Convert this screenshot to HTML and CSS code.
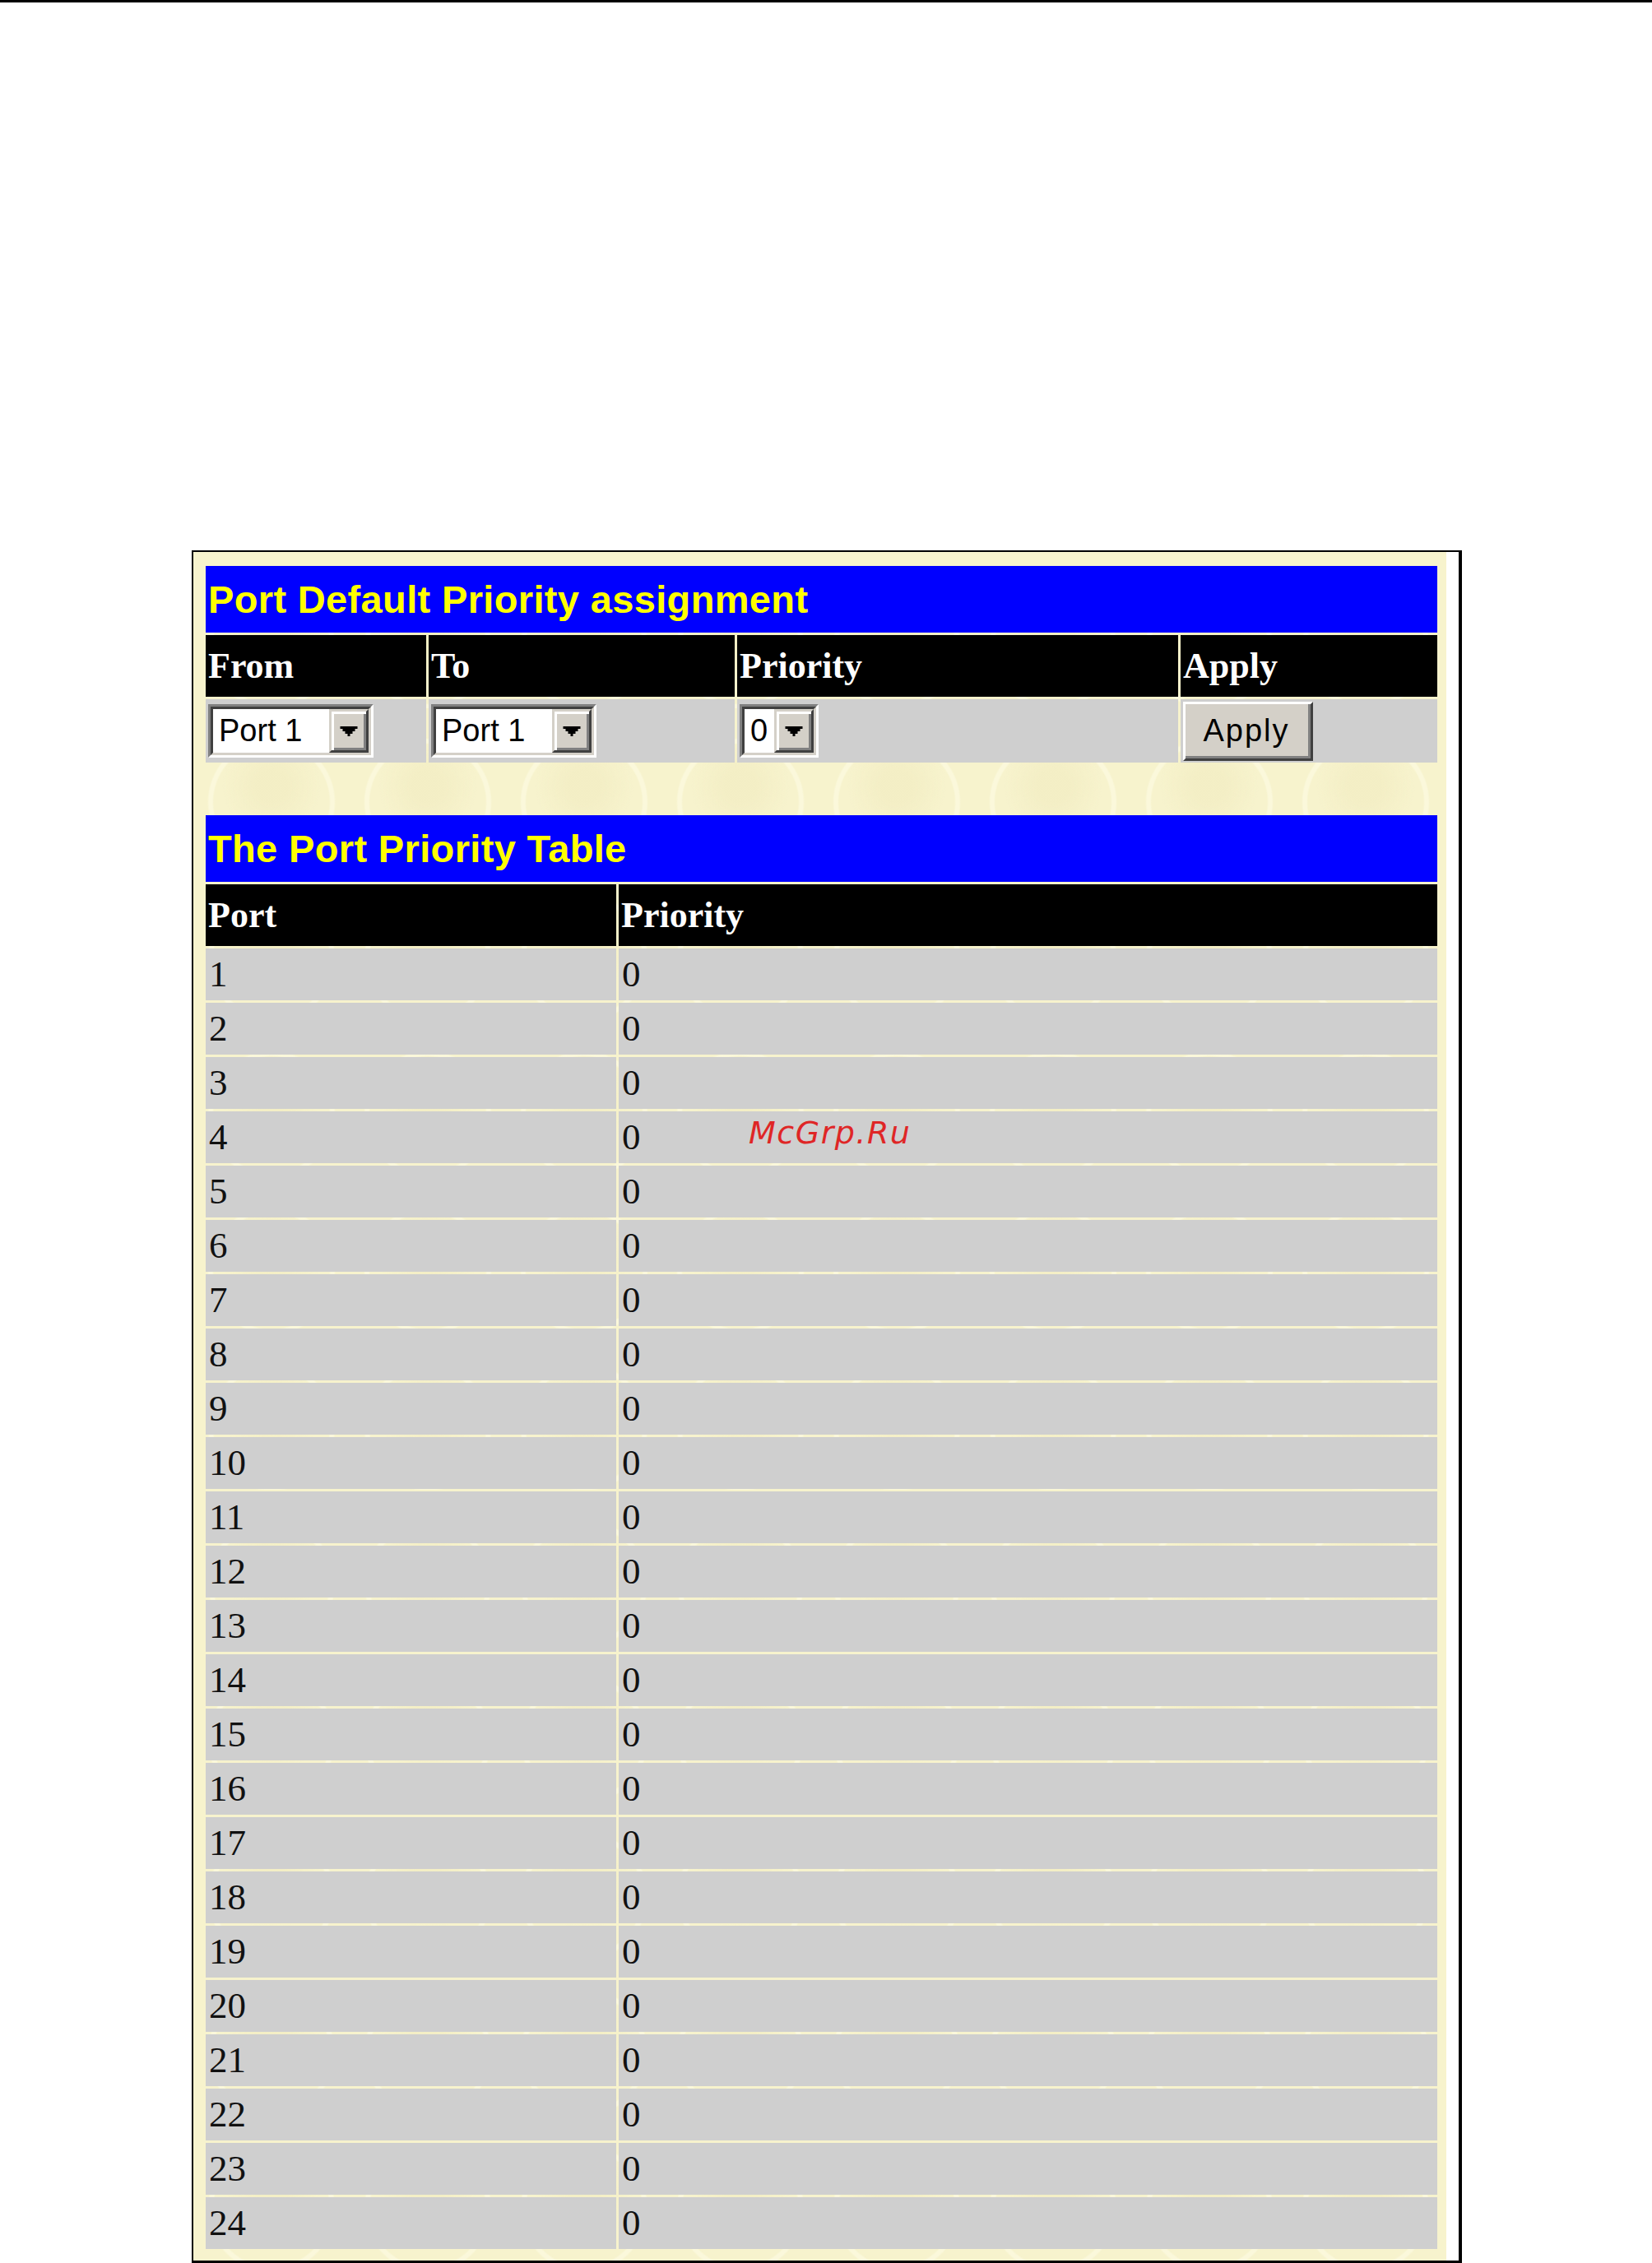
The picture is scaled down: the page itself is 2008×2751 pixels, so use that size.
FILE: index.html
```html
<!DOCTYPE html>
<html lang="en">
<head>
    <meta charset="UTF-8">
    <title>Port Default Priority</title>
    <link rel="stylesheet" href="styles.css">
</head>
<body>
    <div class="topline"></div>

    <div class="frame">
        <div class="panel">
            <table class="grid">
                <colgroup>
                    <col class="c-from">
                    <col class="c-to">
                    <col class="c-prio">
                    <col class="c-apply">
                </colgroup>
                <tr>
                    <td class="title" colspan="4">Port Default Priority assignment</td>
                </tr>
                <tr>
                    <th>From</th>
                    <th>To</th>
                    <th>Priority</th>
                    <th>Apply</th>
                </tr>
                <tr class="form-row">
                    <td>
                        <span class="combo combo-port">
                            <span class="combo-in">
                                <span class="combo-value">Port 1</span>
                                <span class="combo-btn"><svg width="22" height="12" viewBox="0 0 7 4"><path d="M0 0h7v1h-1v1h-1v1h-1v1h-1v-1h-1v-1h-1v-1h-1z"/></svg></span>
                            </span>
                        </span>
                    </td>
                    <td>
                        <span class="combo combo-port">
                            <span class="combo-in">
                                <span class="combo-value">Port 1</span>
                                <span class="combo-btn"><svg width="22" height="12" viewBox="0 0 7 4"><path d="M0 0h7v1h-1v1h-1v1h-1v1h-1v-1h-1v-1h-1v-1h-1z"/></svg></span>
                            </span>
                        </span>
                    </td>
                    <td>
                        <span class="combo combo-prio">
                            <span class="combo-in">
                                <span class="combo-value">0</span>
                                <span class="combo-btn"><svg width="22" height="12" viewBox="0 0 7 4"><path d="M0 0h7v1h-1v1h-1v1h-1v1h-1v-1h-1v-1h-1v-1h-1z"/></svg></span>
                            </span>
                        </span>
                    </td>
                    <td>
                        <button class="btn" type="button">Apply</button>
                    </td>
                </tr>
            </table>

            <table class="grid">
                <colgroup>
                    <col class="c-port">
                    <col class="c-value">
                </colgroup>
                <tr>
                    <td class="title" colspan="2">The Port Priority Table</td>
                </tr>
                <tr>
                    <th>Port</th>
                    <th>Priority</th>
                </tr>
                <tr class="data-row"><td>1</td><td>0</td></tr>
                <tr class="data-row"><td>2</td><td>0</td></tr>
                <tr class="data-row"><td>3</td><td>0</td></tr>
                <tr class="data-row"><td>4</td><td>0</td></tr>
                <tr class="data-row"><td>5</td><td>0</td></tr>
                <tr class="data-row"><td>6</td><td>0</td></tr>
                <tr class="data-row"><td>7</td><td>0</td></tr>
                <tr class="data-row"><td>8</td><td>0</td></tr>
                <tr class="data-row"><td>9</td><td>0</td></tr>
                <tr class="data-row"><td>10</td><td>0</td></tr>
                <tr class="data-row"><td>11</td><td>0</td></tr>
                <tr class="data-row"><td>12</td><td>0</td></tr>
                <tr class="data-row"><td>13</td><td>0</td></tr>
                <tr class="data-row"><td>14</td><td>0</td></tr>
                <tr class="data-row"><td>15</td><td>0</td></tr>
                <tr class="data-row"><td>16</td><td>0</td></tr>
                <tr class="data-row"><td>17</td><td>0</td></tr>
                <tr class="data-row"><td>18</td><td>0</td></tr>
                <tr class="data-row"><td>19</td><td>0</td></tr>
                <tr class="data-row"><td>20</td><td>0</td></tr>
                <tr class="data-row"><td>21</td><td>0</td></tr>
                <tr class="data-row"><td>22</td><td>0</td></tr>
                <tr class="data-row"><td>23</td><td>0</td></tr>
                <tr class="data-row"><td>24</td><td>0</td></tr>
            </table>
        </div>
    </div>

    <!-- watermark over the table -->
    <div class="mark">McGrp.Ru</div>
</body>
</html>
```

FILE: styles.css
```css
body {
    margin: 0;
    background: #fff;
    font-family: "Liberation Sans", Arial, sans-serif;
}

.topline {
    height: 3px;
    background: #000;
}

.frame {
    display: flex;
    width: 1538px;
    margin: 666px 0 0 233px;
    border-style: solid;
    border-color: #000;
    border-width: 2px 4px 4px 2px;
    background: #fff;
}

.panel {
    width: 1523px;
    box-sizing: border-box;
    padding: 14px 8px 11px 12px;
    background-color: #f7f3cd;
    background-image:
        radial-gradient(circle at 50% 60%, transparent 0 70px, rgba(255,255,235,0.45) 72px 76px, transparent 78px),
        radial-gradient(circle at 50% 50%, rgba(240,234,190,0.5) 0 20px, transparent 60px);
    background-size: 190px 190px, 190px 190px;
}

.grid {
    width: 1503px;
    table-layout: fixed;
    border-collapse: separate;
    border-spacing: 3px;
}

.grid + .grid {
    margin-top: 58px;
}

.c-from { width: 268px; }
.c-to { width: 372px; }
.c-prio { width: 536px; }
.c-apply { width: 312px; }
.c-port { width: 499px; }
.c-value { width: 995px; }

.title {
    height: 81px;
    padding: 0 3px;
    background: #0000ff;
    color: #ffff00;
    font: bold 47px/1 "Liberation Sans", Arial, sans-serif;
    letter-spacing: 0.35px;
}

.grid th {
    height: 75px;
    padding: 0 3px;
    background: #000;
    color: #fff;
    text-align: left;
    font: bold 44px/1 "Liberation Serif", "Times New Roman", serif;
}

.form-row td {
    height: 77px;
    padding: 0 3px;
    background: #cfcfcf;
}

.data-row td {
    height: 63px;
    padding: 0 4px;
    background: #cfcfcf;
    color: #111;
    font: 45px/1 "Liberation Serif", "Times New Roman", serif;
}

/* sunken windows combo box */
.combo {
    display: block;
    box-sizing: border-box;
    height: 65px;
    border: 3px solid;
    border-color: #808080 #fff #fff #808080;
}

.combo-port { width: 201px; }
.combo-prio { width: 96px; }

.combo-in {
    display: flex;
    height: 100%;
    box-sizing: border-box;
    border: 3px solid;
    border-color: #404040 #d4d0c8 #d4d0c8 #404040;
    background: #fff;
}

.combo-value {
    flex: 1;
    display: flex;
    align-items: center;
    padding-left: 7px;
    font-size: 38px;
    color: #000;
}

.combo-btn {
    width: 48px;
    box-sizing: border-box;
    display: flex;
    align-items: center;
    justify-content: center;
    background: #d4d0c8;
    border: 3px solid;
    border-color: #d4d0c8 #404040 #404040 #d4d0c8;
    box-shadow: inset 3px 3px 0 #fff, inset -3px -3px 0 #808080;
}

.btn {
    display: block;
    width: 158px;
    height: 72px;
    padding: 0 4px 0 0;
    background: #d4d0c8;
    border: 3px solid;
    border-color: #fff #404040 #404040 #fff;
    box-shadow: inset -3px -3px 0 #808080;
    font: 38px "Liberation Sans", Arial, sans-serif;
    letter-spacing: 2px;
    color: #000;
}

.mark {
    position: absolute;
    left: 910px;
    top: 1358px;
    font: italic 38px/38px "DejaVu Sans", sans-serif;
    letter-spacing: 1.5px;
    color: #df2626;
}
```
